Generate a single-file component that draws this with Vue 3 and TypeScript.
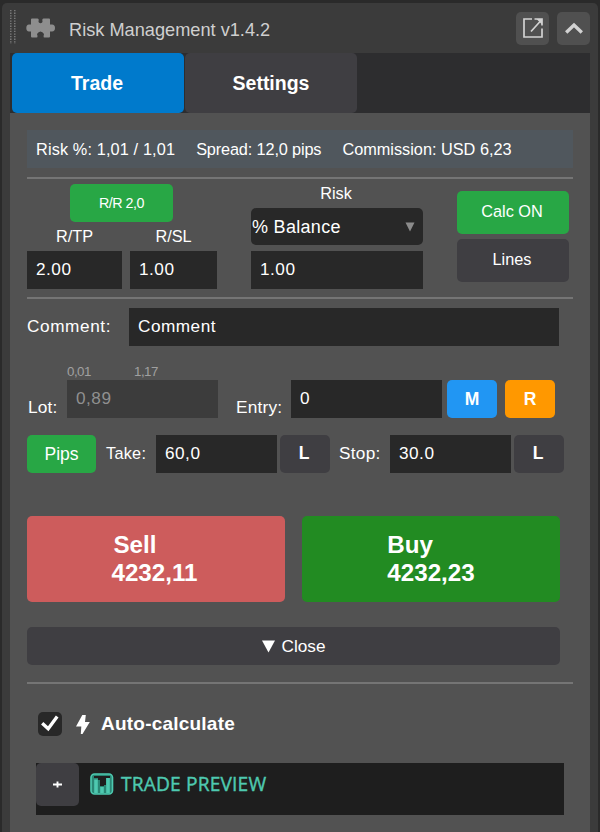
<script setup lang="ts">
import { ref } from 'vue'

type Tab = 'Trade' | 'Settings'

const tabs: Tab[] = ['Trade', 'Settings']
const activeTab = ref<Tab>('Trade')
const stats = ['Risk %: 1,01 / 1,01', 'Spread: 12,0 pips', 'Commission: USD 6,23']

const takeRatio = ref('2.00')
const stopRatio = ref('1.00')
const risk = ref('1.00')
const comment = ref('Comment')
const lot = ref('0,89')
const entry = ref('0')
const take = ref('60,0')
const stop = ref('30.0')
const autoCalculate = ref(true)
</script>

<template>
  <div class="window">
    <header class="titlebar">
      <svg class="grip" width="6" height="34" viewBox="0 0 6 34">
        <path d="M.8 0V34M4.800 0V34" stroke="#858585" stroke-width="1.3" stroke-dasharray="1.3 1.3" />
      </svg>
      <svg class="puzzle" width="30" height="20" viewBox="0 0 30 20">
        <path
          fill="#8e8e8e"
          d="M6 .500H11.500Q13 .500 12.700 2L12.500 4Q14.500 6.500 16.500 4L16.300 2Q16.200 .500 17.500 .500H23Q24 .500 24 1.500V6.500H26Q29 6.800 29 10Q29 13.200 26 13.500H24V18.500Q24 19.500 23 19.500H18.500Q17.300 19.500 17.600 18L18 16Q16.500 13.500 14.500 13.500Q12.500 13.500 11 16L11.500 18Q11.700 19.500 10.500 19.500H6Q5 19.500 5 18.500V13.500H3Q.300 13.200 .300 10Q.300 6.800 3 6.500H5V1.500Q5 .500 6 .500z"
        />
      </svg>
      <h1>Risk Management v1.4.2</h1>
      <button class="chrome" aria-label="Open">
        <svg width="22" height="22" viewBox="0 0 22 22" fill="none" stroke="#d2d2d2" stroke-width="1.700">
          <path d="M10 2H2V20H20V11.500M12.500 2H20V8.500M9 14.500L19 3.500" />
          <path d="M14.500 2H20V7.500z" fill="#d2d2d2" stroke="none" />
        </svg>
      </button>
      <button class="chrome" aria-label="Collapse">
        <svg width="20" height="14" viewBox="0 0 20 14" fill="none" stroke="#d2d2d2" stroke-width="3.400">
          <path d="M2.200 11.500L10 4L17.800 11.500" />
        </svg>
      </button>
    </header>

    <nav class="tabs">
      <button
        v-for="tab in tabs"
        :key="tab"
        :class="['tab', { active: tab === activeTab }]"
        @click="activeTab = tab"
      >{{ tab }}</button>
    </nav>

    <main class="panel">
      <section class="stats">
        <span v-for="stat in stats" :key="stat">{{ stat }}</span>
      </section>

      <section class="ratios">
        <div class="ratio-group">
          <button class="green ratio-button">R/R 2,0</button>
          <div class="ratio-fields">
            <label>R/TP<input v-model="takeRatio" /></label>
            <label>R/SL<input v-model="stopRatio" /></label>
          </div>
        </div>
        <div class="risk-group">
          <span class="risk-label">Risk</span>
          <button class="select">
            <span>% Balance</span>
            <svg width="10" height="10" viewBox="0 0 10 10"><path d="M.500 .500H9.500L5 9.500z" fill="#8b8b8b" /></svg>
          </button>
          <input v-model="risk" />
        </div>
        <div class="mode-group">
          <button class="green">Calc ON</button>
          <button class="dark">Lines</button>
        </div>
      </section>

      <section class="comment">
        <label for="comment">Comment:</label>
        <input id="comment" v-model="comment" />
      </section>

      <section class="order">
        <label class="low">Lot:</label>
        <div class="lot">
          <div class="limits"><span>0,01</span><span>1,17</span></div>
          <input v-model="lot" disabled />
        </div>
        <label class="low entry-label">Entry:</label>
        <input v-model="entry" class="entry" />
        <button class="letter blue">M</button>
        <button class="letter orange">R</button>
      </section>

      <section class="exits">
        <button class="green pips">Pips</button>
        <label class="take">Take:</label>
        <input v-model="take" />
        <button class="letter dark">L</button>
        <label class="stop">Stop:</label>
        <input v-model="stop" />
        <button class="letter dark">L</button>
      </section>

      <section class="deals">
        <button class="sell"><span><span class="side">Sell</span><br />4232,11</span></button>
        <button class="buy"><span>Buy<br />4232,23</span></button>
      </section>

      <button class="dark close">
        <svg width="13" height="13" viewBox="0 0 13 13"><path d="M0 .500H13L6.500 12.500z" fill="#fff" /></svg>
        Close
      </button>

      <section class="auto">
        <button class="check" role="checkbox" :aria-checked="autoCalculate" @click="autoCalculate = !autoCalculate">
          <svg v-if="autoCalculate" width="18" height="17" viewBox="0 0 18 17" fill="none" stroke="#fff" stroke-width="3.300">
            <path d="M1.200 8.200L7.200 13.800L16.200 1.500" />
          </svg>
        </button>
        <svg class="bolt" width="14" height="19" viewBox="0 0 14 19">
          <path d="M6.300 0H9.800L9 7H13.800L6.500 19H4.800L5.300 11.500H0z" fill="#fff" />
        </svg>
        <span>Auto-calculate</span>
      </section>

      <section class="preview">
        <button class="dark expand" aria-label="Expand">
          <svg width="9" height="7" viewBox="0 0 9 7"><path d="M0 3.500H9M4.500 .500V6.500" stroke="#fff" stroke-width="1.900" /></svg>
        </button>
        <svg class="chart" width="24" height="22" viewBox="0 0 24 22">
          <rect x="1" y="1" width="21.500" height="20" rx="3.500" fill="#2a8674" stroke="#4ec9b0" stroke-width="1.600" />
          <path d="M4 3H20V5H16V12H14V13H10V7H8V5H4z" fill="#1e1e1e" />
          <path d="M6 6.500V20M12 14V20M18 5V20" stroke="#4ec9b0" stroke-width="3.600" />
        </svg>
        <span>TRADE PREVIEW</span>
      </section>
    </main>
  </div>
</template>

<style>
body {
  margin: 0;
  background: #2a2a2a;
}
</style>

<style scoped>
* {
  box-sizing: border-box;
}
.window {
  width: 596px;
  height: 829px;
  margin: 3px 2px 0;
  padding: 0 8px;
  overflow: hidden;
  border-radius: 5px 5px 0 0;
  background: #3b3b3b;
  color: #fff;
  font: 16.3px/20px "Liberation Sans", Arial, sans-serif;
}
button,
input {
  min-width: 0;
  margin: 0;
  padding: 0;
  border: 0;
  color: #fff;
  font: inherit;
}
button {
  display: flex;
  align-items: center;
  justify-content: center;
  border-radius: 5px;
}
input {
  height: 38px;
  padding: 0 9px 2px;
  border-radius: 0;
  background: #282828;
  font-size: 17.2px;
  letter-spacing: 0.5px;
}
svg {
  display: block;
  flex: none;
}
.titlebar {
  display: flex;
  align-items: center;
  height: 50px;
}
.grip {
  margin-top: -3px;
}
.puzzle {
  margin-left: 10px;
}
h1 {
  flex: 1;
  margin: 3px 0 0 13px;
  color: #cfcfcf;
  font-size: 18.2px;
  font-weight: 400;
}
.chrome {
  width: 33px;
  height: 33px;
  margin-right: 8px;
  background: #505050;
}
.chrome:last-child {
  margin-right: 0;
}
.tabs {
  display: flex;
  gap: 1px;
  height: 60px;
  padding-left: 2px;
  background: #2d2d2f;
}
.tab {
  width: 172px;
  background: #3f3e42;
  font-size: 19.5px;
  font-weight: 700;
}
.tab.active {
  padding-right: 2px;
  background: #007acc;
}
.panel {
  height: 719px;
  padding: 17px 17px 0;
  background: #525252;
}
.green {
  background: #28a745;
}
.dark {
  background: #3f3e42;
}
.stats {
  display: flex;
  gap: 21px;
  align-items: center;
  height: 38px;
  padding-left: 9px;
  background: #50575d;
  white-space: nowrap;
}
.stats span:first-child {
  letter-spacing: 0.13px;
}
.stats span:nth-child(2) {
  letter-spacing: -0.14px;
}
.ratios {
  display: grid;
  grid-template-columns: 190px 172px 112px;
  column-gap: 34px;
  height: 122px;
  margin-top: 9px;
  padding-top: 5px;
  border-top: 2px solid #757575;
  border-bottom: 2px solid #757575;
}
.ratio-button {
  width: 103px;
  height: 38px;
  margin-left: 43px;
  font-size: 14.3px;
  letter-spacing: -0.5px;
}
.ratio-fields {
  display: grid;
  grid-template-columns: 95px 87px;
  gap: 8px;
  margin-top: 4px;
}
.ratio-fields label {
  display: grid;
  grid-template-rows: 25px 38px;
  text-align: center;
}
.risk-label {
  display: block;
  height: 24px;
  padding-right: 2px;
  line-height: 19px;
  text-align: center;
}
.select {
  justify-content: space-between;
  width: 172px;
  height: 37px;
  margin-bottom: 6px;
  padding: 0 8px 0 1px;
  background: #282828;
  font-size: 18px;
  letter-spacing: 0.3px;
}
.risk-group input {
  width: 172px;
}
.mode-group {
  display: grid;
  grid-template-rows: 43px 43px;
  gap: 5px;
  padding-top: 7px;
}
.mode-group button {
  padding: 0 2px 3px 0;
}
.comment {
  display: grid;
  grid-template-columns: 102px 430px;
  align-items: center;
  height: 38px;
  margin-top: 9px;
}
label[for='comment'] {
  padding-bottom: 2px;
  font-size: 17.2px;
  letter-spacing: 0.6px;
}
.order {
  display: flex;
  align-items: flex-end;
  height: 55px;
  margin-top: 17px;
}
.low {
  padding-bottom: 1px;
  font-size: 17.3px;
  letter-spacing: 0.2px;
}
.low:first-child {
  width: 40px;
  padding-left: 1px;
}
.lot {
  width: 151px;
}
.limits {
  display: grid;
  grid-template-columns: 67px auto;
  height: 17px;
  color: #a0a0a0;
  font-size: 13.3px;
  line-height: 18px;
  letter-spacing: -0.5px;
}
.lot input {
  width: 151px;
  display: block;
  background: #3c3c3c;
  color: #909090;
}
.entry-label {
  width: 73px;
  padding-left: 18px;
}
.entry {
  width: 151px;
}
.letter {
  width: 50px;
  height: 38px;
  font-size: 17.5px;
  font-weight: 700;
}
.blue {
  margin: 0 8px 0 5px;
  background: #2196f3;
}
.orange {
  background: #ff9800;
}
.exits {
  display: grid;
  grid-template-columns: 69px 60px 121px 53px 60px 121px 53px;
  align-items: center;
  height: 38px;
  margin-top: 17px;
}
.exits .letter {
  justify-self: end;
  padding: 0 2px 2px 0;
}
.pips {
  height: 38px;
  font-size: 17.5px;
}
.take {
  padding: 0 0 2px 10px;
  letter-spacing: 0.25px;
}
.stop {
  padding: 0 0 2px 9px;
  font-size: 17.2px;
  letter-spacing: 0.3px;
}
.deals {
  display: grid;
  grid-template-columns: 258px 258px;
  gap: 17px;
  height: 86px;
  margin-top: 43px;
}
.deals button {
  font-size: 24.2px;
  font-weight: 700;
  line-height: 28px;
  text-align: left;
}
.side {
  padding-left: 2px;
}
.sell {
  background: #cd5c5c;
  padding-right: 3px;
}
.buy {
  background: #228b22;
}
.close {
  gap: 7px;
  width: 533px;
  height: 38px;
  margin: 25px 0 17px;
  font-size: 17.2px;
}
.auto {
  display: flex;
  align-items: center;
  height: 81px;
  padding-left: 11px;
  border-top: 2px solid #757575;
  font-size: 19px;
  font-weight: 700;
  letter-spacing: 0.22px;
}
.check {
  width: 24px;
  height: 24px;
  background: #282828;
}
.bolt {
  margin: 2px 11px 0 14px;
}
.preview {
  display: flex;
  width: 528px;
  height: 52px;
  margin-left: 9px;
  background: #1e1e1e;
  color: #4ec9b0;
}
.expand {
  width: 43px;
  height: 43px;
}
.chart {
  margin: 10px 0 0 11px;
}
.preview span {
  margin: 8px 0 0 7px;
  font: 500 19.2px/26px "Open Sans", "Noto Sans", sans-serif;
  letter-spacing: 0.15px;
  -webkit-text-stroke: 0.4px #4ec9b0;
}
</style>
